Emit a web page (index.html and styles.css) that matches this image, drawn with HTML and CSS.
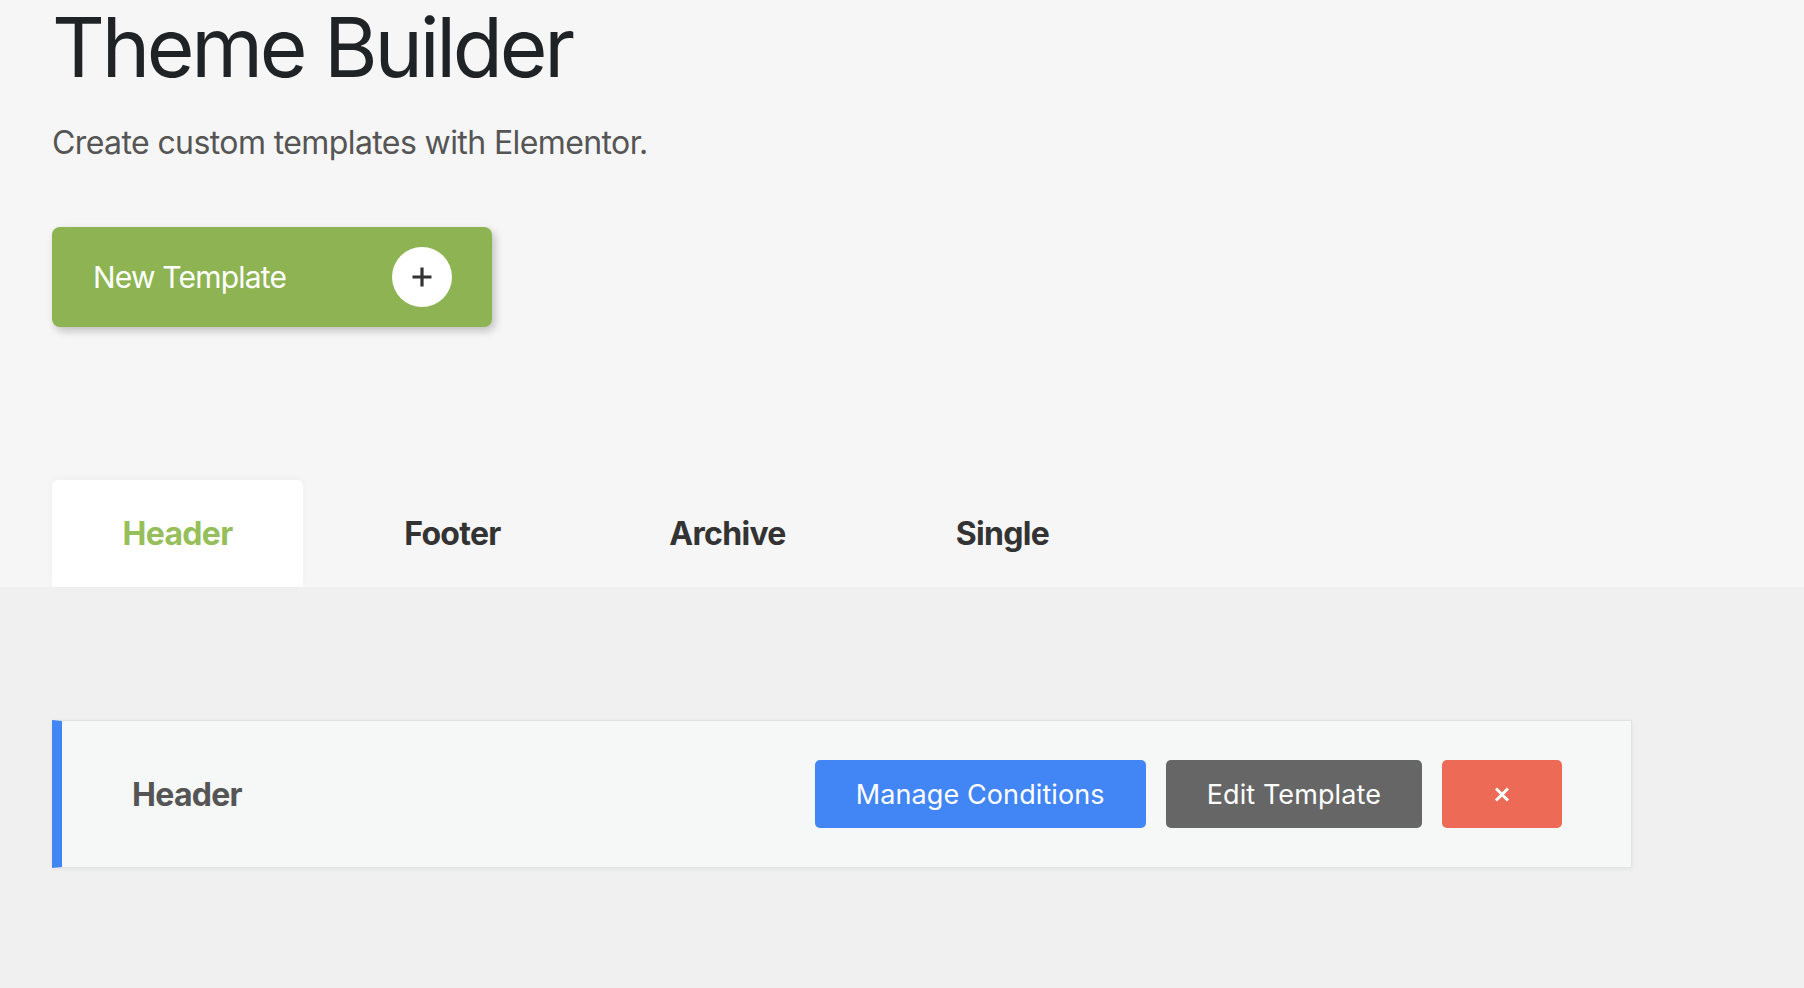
FILE: index.html
```html
<!DOCTYPE html>
<html lang="en">
<head>
<meta charset="utf-8">
<title>Theme Builder</title>
<link rel="stylesheet" href="styles.css">
</head>
<body>
<div class="top">
  <h1 class="title">Theme Builder</h1>
  <p class="subtitle">Create custom templates with Elementor.</p>
  <button class="new-btn" type="button">
    <span class="new-label">New Template</span>
    <span class="plus-circle">
      <svg width="20" height="20" viewBox="0 0 20 20"><path d="M10 0.5V19.5M0.5 10H19.5" stroke="#333" stroke-width="3.2" fill="none"/></svg>
    </span>
  </button>
  <nav class="tabs">
    <div class="tab active">Header</div>
    <div class="tab">Footer</div>
    <div class="tab">Archive</div>
    <div class="tab">Single</div>
  </nav>
</div>
<div class="content">
  <div class="card">
    <div class="card-title">Header</div>
    <div class="actions">
      <button class="btn btn-blue" type="button">Manage Conditions</button>
      <button class="btn btn-gray" type="button">Edit Template</button>
      <button class="btn btn-red" type="button" aria-label="Delete">
        <svg width="16" height="15" viewBox="0 0 16 15"><path d="M2 1.5L14 13.5M14 1.5L2 13.5" stroke="#fff" stroke-width="3" fill="none"/></svg>
      </button>
    </div>
  </div>
</div>
</body>
</html>
```
FILE: styles.css
```css
html, body {
  margin: 0;
  padding: 0;
}
body {
  background: #f0f0f0;
  font-family: Inter, "Liberation Sans", sans-serif;
  min-height: 988px;
}
.top {
  background: #f6f6f6;
  padding: 7px 0 0 52px;
}
.title {
  margin: 0;
  font-size: 82px;
  line-height: 1;
  font-weight: 400;
  color: #1f2326;
  letter-spacing: -3.3px;
}
.subtitle {
  margin: 38px 0 0;
  font-size: 32px;
  line-height: 1;
  color: #555;
  font-weight: 400;
  letter-spacing: -0.6px;
}
.new-btn {
  margin-top: 68px;
  width: 440px;
  height: 100px;
  display: flex;
  align-items: center;
  justify-content: space-between;
  padding: 0 40px 0 41px;
  box-sizing: border-box;
  border: none;
  border-radius: 8px;
  background: #8db352;
  box-shadow: 3px 4px 8px rgba(0, 0, 0, 0.22);
  font-family: inherit;
  cursor: pointer;
}
.new-label {
  color: #fff;
  font-size: 30px;
  line-height: 1;
  letter-spacing: -0.8px;
}
.plus-circle {
  width: 60px;
  height: 60px;
  border-radius: 50%;
  background: #fff;
  display: flex;
  align-items: center;
  justify-content: center;
}
.tabs {
  margin-top: 153px;
  display: flex;
  gap: 24px;
}
.tab {
  width: 251px;
  height: 107px;
  display: flex;
  align-items: center;
  justify-content: center;
  font-size: 32px;
  font-weight: 700;
  letter-spacing: -0.7px;
  color: #333;
  border-radius: 6px 6px 0 0;
}
.tab.active {
  background: #fff;
  color: #96bf5c;
  box-shadow: 0 -2px 10px rgba(0, 0, 0, 0.03);
}
.content {
  padding: 133px 0 0 52px;
}
.card {
  width: 1580px;
  height: 148px;
  box-sizing: border-box;
  background: #f6f7f7;
  border: 1px solid #e2e3e3;
  border-left: 10px solid #4285f4;
  box-shadow: 0 1px 4px rgba(0, 0, 0, 0.06);
  display: flex;
  align-items: center;
  justify-content: space-between;
  padding: 0 69px 0 70px;
}
.card-title {
  font-size: 32px;
  font-weight: 700;
  letter-spacing: -0.7px;
  color: #555;
}
.actions {
  display: flex;
  gap: 20px;
}
.btn {
  height: 68px;
  border: none;
  border-radius: 5px;
  color: #fff;
  font-family: inherit;
  font-size: 27px;
  letter-spacing: 0.1px;
  padding: 0 41px;
  cursor: pointer;
}
.btn-blue { background: #4285f4; }
.btn-gray { background: #666; }
.btn-red {
  background: #ed6a56;
  width: 120px;
  padding: 0;
  display: flex;
  align-items: center;
  justify-content: center;
}
```
